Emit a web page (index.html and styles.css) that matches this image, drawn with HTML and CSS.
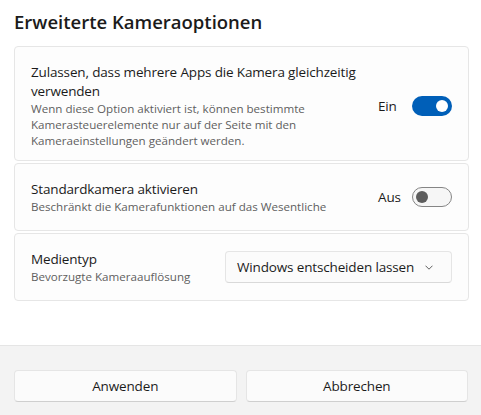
FILE: index.html
```html
<!DOCTYPE html>
<html lang="de">
<head>
<meta charset="utf-8">
<title>Erweiterte Kameraoptionen</title>
<link rel="stylesheet" href="styles.css">
</head>
<body>
<div class="dialog">
  <div class="content">
    <h1 class="heading">Erweiterte Kameraoptionen</h1>
    <div class="cards">
      <div class="card card-tall">
        <div class="text">
          <div class="title">Zulassen, dass mehrere Apps die Kamera gleichzeitig verwenden</div>
          <div class="desc">Wenn diese Option aktiviert ist, können bestimmte Kamerasteuerelemente nur auf der Seite mit den Kameraeinstellungen geändert werden.</div>
        </div>
        <div class="control">
          <span class="state">Ein</span>
          <span class="toggle on"><span class="knob"></span></span>
        </div>
      </div>
      <div class="card">
        <div class="text">
          <div class="title">Standardkamera aktivieren</div>
          <div class="desc">Beschränkt die Kamerafunktionen auf das Wesentliche</div>
        </div>
        <div class="control">
          <span class="state">Aus</span>
          <span class="toggle off"><span class="knob"></span></span>
        </div>
      </div>
      <div class="card">
        <div class="text">
          <div class="title">Medientyp</div>
          <div class="desc">Bevorzugte Kameraauflösung</div>
        </div>
        <div class="combo">
          <span class="combo-text">Windows entscheiden lassen</span>
          <svg class="chevron" width="8" height="5" viewBox="0 0 8 5" aria-hidden="true"><path d="M0.5 0.7 L4 4.2 L7.5 0.7" fill="none" stroke="#5f5f5f" stroke-width="1"/></svg>
        </div>
      </div>
    </div>
  </div>
  <div class="footer">
    <button class="btn">Anwenden</button>
    <button class="btn">Abbrechen</button>
  </div>
</div>
</body>
</html>
```
FILE: styles.css
```css
* { box-sizing: border-box; }
html, body { margin: 0; padding: 0; }
body {
  width: 481px;
  height: 415px;
  background: #ffffff;
  font-family: "Open Sans", "Noto Sans", "Liberation Sans", sans-serif;
  color: #1b1b1b;
  overflow: hidden;
}
.dialog {
  display: flex;
  flex-direction: column;
  height: 415px;
}
.content {
  flex: 1;
  padding: 8px 12px 0 14px;
}
.heading {
  margin: 0 0 10px 0;
  font-size: 18.5px;
  line-height: 28px;
  font-weight: 600;
  color: #1b1b1b;
}
.cards {
  display: flex;
  flex-direction: column;
  gap: 2px;
}
.card {
  display: flex;
  align-items: center;
  min-height: 68px;
  padding: 0 16px;
  background: #fdfdfd;
  border: 1px solid #e6e6e6;
  border-radius: 4px;
}
.card-tall {
  padding: 16px 16px 11px 16px;
  min-height: 115px;
}
.text {
  flex: 1;
  min-width: 0;
}
.title {
  font-size: 13.5px;
  letter-spacing: -0.15px;
  line-height: 19px;
  color: #1b1b1b;
}
.desc {
  font-size: 11.6px;
  line-height: 16px;
  color: #5f5f5f;
}
.control {
  display: flex;
  align-items: center;
  flex-shrink: 0;
}
.state {
  width: 34px;
  font-size: 13.5px;
  letter-spacing: -0.15px;
  line-height: 19px;
  color: #1b1b1b;
}
.toggle {
  position: relative;
  display: block;
  width: 40px;
  height: 20px;
  border-radius: 10px;
}
.toggle.on {
  background: #005fb8;
}
.toggle.off {
  background: #f6f6f6;
  border: 1px solid #858585;
}
.knob {
  position: absolute;
  top: 50%;
  width: 12px;
  height: 12px;
  margin-top: -6px;
  border-radius: 50%;
}
.toggle.on .knob {
  right: 4px;
  background: #ffffff;
}
.toggle.off .knob {
  left: 3px;
  background: #5d5d5d;
}
.combo {
  display: flex;
  align-items: center;
  justify-content: space-between;
  width: 227px;
  height: 32px;
  padding: 0 18px 0 11px;
  background: #fbfbfb;
  border: 1px solid #e5e5e5;
  border-bottom-color: #d9d9d9;
  border-radius: 4px;
  flex-shrink: 0;
}
.combo-text {
  font-size: 13.5px;
  letter-spacing: -0.15px;
  line-height: 19px;
  color: #1b1b1b;
}
.chevron {
  display: block;
}
.footer {
  height: 70px;
  flex-shrink: 0;
  background: #f3f3f3;
  border-top: 1px solid #e5e5e5;
  padding: 24px 13px 0 14px;
  display: grid;
  grid-template-columns: 1fr 1fr;
  column-gap: 9px;
  align-items: start;
}
.btn {
  height: 32px;
  margin: 0;
  padding: 0;
  background: #fbfbfb;
  border: 1px solid #e5e5e5;
  border-bottom-color: #cfcfcf;
  border-radius: 4px;
  font-family: inherit;
  font-size: 13.5px;
  letter-spacing: -0.15px;
  color: #1b1b1b;
}
```
